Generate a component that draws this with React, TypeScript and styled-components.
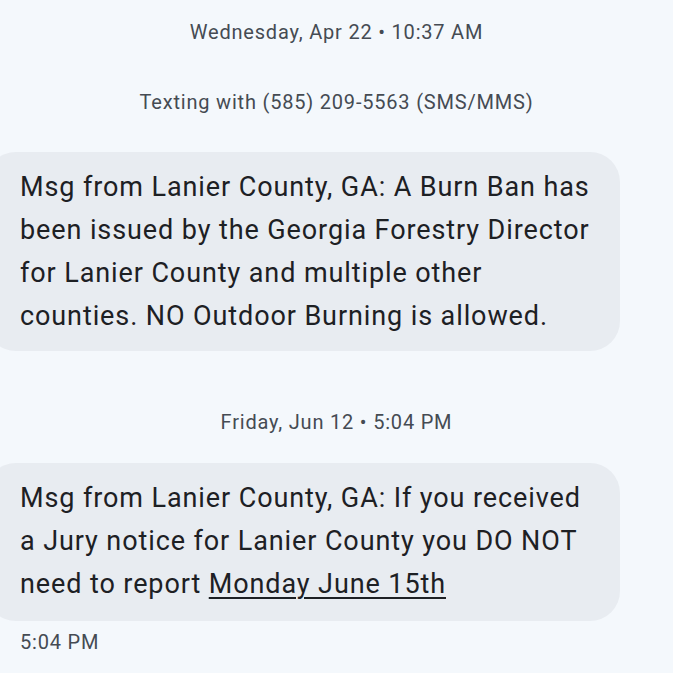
import React from 'react';
import styled, { createGlobalStyle } from 'styled-components';

const GlobalStyle = createGlobalStyle`
    html, body {
        margin: 0;
        padding: 0;
        background: #f4f8fc;
    }
    body {
        font-family: Roboto, "Noto Sans", sans-serif;
        overflow: hidden;
    }
`;

const Thread = styled.div`
    width: 673px;
    height: 673px;
    display: flex;
    flex-direction: column;
    padding-top: 19px;
    box-sizing: border-box;
    overflow: hidden;
`;

const DateLine = styled.div<{ $gap: number }>`
    text-align: center;
    font-size: 20px;
    letter-spacing: 0.8px;
    line-height: 26px;
    color: #454b53;
    margin-bottom: ${p => p.$gap}px;
`;

const Info = styled.div`
    text-align: center;
    font-size: 20px;
    letter-spacing: 0.8px;
    line-height: 26px;
    color: #454b53;
    margin-bottom: 37px;
`;

// Incoming message bubble, bleeds off the left edge
const Bubble = styled.div<{ $gap: number; $tail: number }>`
    align-self: flex-start;
    margin-left: -14px;
    width: 634px;
    box-sizing: border-box;
    padding: 14px 20px ${p => p.$tail}px 34px;
    background: #e8ecf1;
    border-radius: 30px;
    font-size: 27px;
    letter-spacing: 0.9px;
    line-height: 43px;
    color: #1d2024;
    margin-bottom: ${p => p.$gap}px;
`;

const Underlined = styled.span`
    text-decoration: underline;
    text-underline-offset: 4px;
    text-decoration-thickness: 2px;
`;

const Stamp = styled.div`
    padding-left: 20px;
    font-size: 20px;
    letter-spacing: 0.8px;
    line-height: 26px;
    color: #454b53;
`;

const App = () => {
    return (
        <>
            <GlobalStyle />
            <Thread>
                <DateLine $gap={44}>Wednesday, Apr 22 • 10:37 AM</DateLine>
                <Info>Texting with (585) 209-5563 (SMS/MMS)</Info>
                <Bubble $gap={58} $tail={13}>
                    Msg from Lanier County, GA: A Burn Ban has been issued by the Georgia Forestry Director for Lanier County and multiple other counties. NO Outdoor Burning is allowed.
                </Bubble>
                <DateLine $gap={28}>Friday, Jun 12 • 5:04 PM</DateLine>
                <Bubble $gap={8} $tail={15}>
                    Msg from Lanier County, GA: If you received a Jury notice for Lanier County you DO NOT need to report <Underlined>Monday June 15th</Underlined>
                </Bubble>
                <Stamp>5:04 PM</Stamp>
            </Thread>
        </>
    );
};

export default App;
